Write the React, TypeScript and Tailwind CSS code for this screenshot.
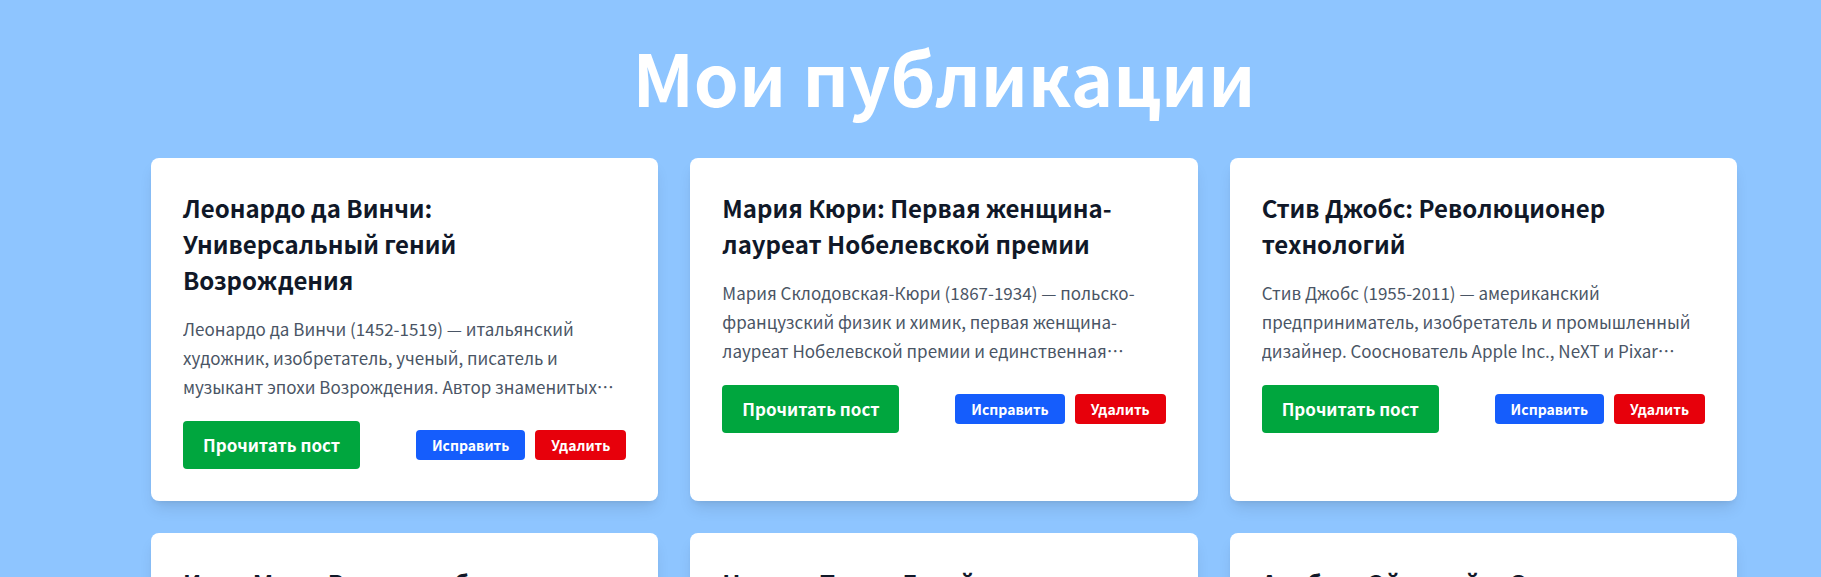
const posts = [
  {
    id: 1,
    title: "Леонардо да Винчи: Универсальный гений Возрождения",
    text: "Леонардо да Винчи (1452-1519) — итальянский художник, изобретатель, ученый, писатель и музыкант эпохи Возрождения. Автор знаменитых картин «Мона Лиза» и «Тайная вечеря».",
  },
  {
    id: 2,
    title: "Мария Кюри: Первая женщина-лауреат Нобелевской премии",
    text: "Мария Склодовская-Кюри (1867-1934) — польско-французский физик и химик, первая женщина-лауреат Нобелевской премии и единственная дважды лауреат в разных науках.",
  },
  {
    id: 3,
    title: "Стив Джобс: Революционер технологий",
    text: "Стив Джобс (1955-2011) — американский предприниматель, изобретатель и промышленный дизайнер. Сооснователь Apple Inc., NeXT и Pixar Animation Studios.",
  },
  {
    id: 4,
    title: "Илон Маск: Визионер будущего",
    text: "Илон Маск — предприниматель и инженер, основатель SpaceX, руководитель Tesla и один из самых известных новаторов нашего времени.",
  },
  {
    id: 5,
    title: "Никола Тесла: Гений электричества",
    text: "Никола Тесла (1856-1943) — изобретатель в области электротехники и радиотехники, создатель систем переменного тока.",
  },
  {
    id: 6,
    title: "Альберт Эйнштейн: Отец теории относительности",
    text: "Альберт Эйнштейн (1879-1955) — физик-теоретик, один из основателей современной теоретической физики, лауреат Нобелевской премии.",
  },
];

function PostCard({ title, text }: { title: string; text: string }) {
  return (
    <div className="rounded-lg bg-white p-8 shadow-lg">
      <h3 className="text-2xl leading-9 font-semibold text-[#101828]">
        {title}
      </h3>
      <p className="mt-4 line-clamp-3 text-[17px] leading-[29px] text-[#4a5565]">
        {text}
      </p>
      <div className="mt-5 flex items-center justify-between">
        <button className="rounded bg-[#00a63e] px-5 py-2.5 text-[17px] leading-7 font-semibold text-white">
          Прочитать пост
        </button>
        <div className="flex gap-2.5">
          <button className="rounded bg-[#155dfc] px-4 py-[5px] text-sm leading-5 font-semibold text-white">
            Исправить
          </button>
          <button className="rounded bg-[#e7000b] px-4 py-[5px] text-sm leading-5 font-semibold text-white">
            Удалить
          </button>
        </div>
      </div>
    </div>
  );
}

export default function App() {
  return (
    <div className="min-h-screen bg-[#8ec5ff] pt-10 pb-16 font-['Noto_Sans_CJK_SC',sans-serif]">
      <div className="ml-[151px] w-[1586px]">
        <h1 className="mb-[46px] text-center text-7xl font-semibold text-white">
          Мои публикации
        </h1>
        <div className="grid grid-cols-3 gap-8">
          {posts.map((post) => (
            <PostCard key={post.id} title={post.title} text={post.text} />
          ))}
        </div>
      </div>
    </div>
  );
}
